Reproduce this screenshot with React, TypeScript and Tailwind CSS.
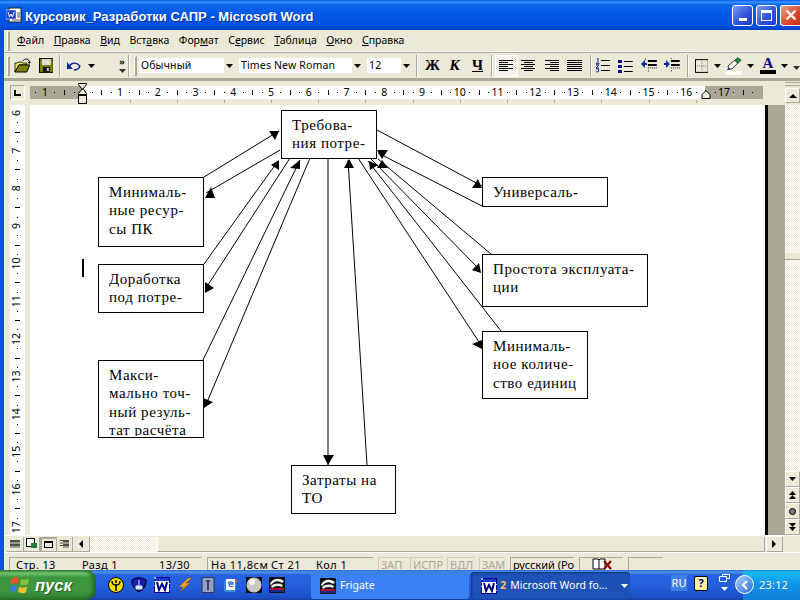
import React from "react";

const UI = "font-['Noto_Sans','Liberation_Sans',sans-serif]";

function Acc({ t, i }: { t: string; i: number }) {
  return (
    <span className="whitespace-nowrap">
      {t.slice(0, i)}
      <span className="underline">{t[i]}</span>
      {t.slice(i + 1)}
    </span>
  );
}

const Caret = ({ c = "#000" }: { c?: string }) => (
  <svg width="7" height="4" viewBox="0 0 7 4"><path d="M0 0h7L3.5 4z" fill={c} /></svg>
);

const Grip = () => <div className="w-[3px] h-[20px] border-l border-t border-white border-r-2 border-b border-r-[#aca899] border-b-[#aca899]" />;
const Sep = () => <div className="w-[2px] h-[22px] bg-[#aca899] border-r border-white" />;

const Combo = ({ w, t }: { w: string; t: string }) => (
  <div className={`${w} h-[15px] bg-white flex items-center justify-between text-[10.5px] leading-none text-black pl-[2px]`}>
    <span className="whitespace-nowrap tracking-[0.15px]">{t}</span>
    <span className="w-[11px] h-full bg-[#ece9d8] flex items-center justify-center"><Caret /></span>
  </div>
);

const AlignIcon = ({ kind, s = 15 }: { kind: "l" | "c" | "r" | "j"; s?: number }) => {
  const rows = [14, 9, 14, 9, 14, 9];
  return (
    <svg width={s} height="14" viewBox="0 0 15 14">
      {rows.map((w, i) => {
        const wd = kind === "j" ? 15 : w;
        const x = kind === "l" || kind === "j" ? 0 : kind === "c" ? (15 - wd) / 2 : 15 - wd;
        return <rect key={i} x={Math.floor(x)} y={1 + i * 2} width={wd} height="1" fill="#000" />;
      })}
    </svg>
  );
};

const Ruler = () => {
  const pos = (n: number) => 120 + (n - 1) * 37.75;
  const marks: React.ReactNode[] = [];
  for (let n = 0; n <= 17; n++) {
    const base = pos(n);
    if (n >= 1) {
      marks.push(<text key={"n" + n} x={base} y="96" textAnchor="middle" fontSize="10.5" fontFamily="'Noto Sans','Liberation Sans',sans-serif" fill="#000">{n}</text>);
    }
    [0.25, 0.5, 0.75].forEach((f, i) => {
      const x = Math.round(base + f * 37.75);
      marks.push(<rect key={n + "-" + i} x={x} y={i === 1 ? 90 : 92} width="1" height={i === 1 ? 5 : 1} fill="#000" />);
    });
  }
  const left = [35, 54, 64, 74];
  const tabs = [130, 177, 224, 271, 318, 365, 413, 460, 507, 554, 601, 649, 696];
  return (
    <svg className="absolute left-0 top-0" width="796" height="24" viewBox="4 81 796 24">
      <rect x="30" y="86" width="53" height="13" fill="#aca899" />
      <rect x="83" y="86" width="622" height="13" fill="#fff" />
      <rect x="705" y="86" width="58" height="13" fill="#aca899" />
      <text x="45" y="96" textAnchor="middle" fontSize="10.5" fontFamily="'Noto Sans','Liberation Sans',sans-serif" fill="#000">1</text>
      {left.map((x, i) => <rect key={i} x={x} y={i === 2 ? 90 : 92} width="1" height={i === 2 ? 5 : 1} fill="#000" />)}
      {marks}
      {tabs.map((x) => <rect key={x} x={x} y="100" width="1" height="3" fill="#aca899" />)}
      <path d="M78.5 83.5h8v1l-3 4 -1 .5 1 .5 3 4v1h-8v-1l3-4 1-.5 -1-.5 -3-4z" fill="#ece9d8" stroke="#000" />
      <rect x="78.5" y="95.5" width="8" height="8" fill="#ece9d8" stroke="#000" />
      <path d="M706 90.500l4 4v4h-8v-4z" fill="#ece9d8" stroke="#000" />
    </svg>
  );
};

const VRuler = () => {
  const p = (n: number) => 8 + (n - 6) * 37.65;
  const items: React.ReactNode[] = [];
  for (let n = 6; n <= 17; n++) {
    items.push(
      <text key={n} x="0" y="0" fontSize="10.5" textAnchor="middle" fontFamily="'Noto Sans','Liberation Sans',sans-serif" fill="#000" transform={`translate(9.500 ${p(n)}) rotate(-90)`}>{n}</text>
    );
    if (n < 17) {
      [0.25, 0.5, 0.75].forEach((f, i) => (
        items.push(<rect key={n + "v" + i} x={i === 1 ? 5 : 7} y={Math.round(p(n) + f * 37.65)} width={i === 1 ? 5 : 1} height="1" fill="#000" />)
      ));
    }
  }
  return <svg width="15" height="430" viewBox="0 0 15 430">{items}</svg>;
};

const lines: number[][] = [
  [204, 177, 279, 131],
  [280, 150, 206, 193],
  [204, 264, 278, 161],
  [290, 158, 206, 288],
  [203, 360, 300, 160],
  [310, 158, 205, 407],
  [328, 158, 328, 465],
  [367, 465, 348, 160],
  [377, 130, 482, 186],
  [482, 206, 378, 153],
  [491, 254, 378, 159],
  [370, 158, 480, 270],
  [501, 331, 368, 161],
  [358, 158, 481, 345],
];
const heads = [
  "269,131 279,131 275,140",
  "205,198 215,198 211,187",
  "279,160 271,165 279,170",
  "205,282 214,288 205,293",
  "300,160 290,168 300,169",
  "204,408 203,398 213,402",
  "323,455 334,455 328,465",
  "349,159 344,168 354,168",
  "478,179 472,188 482,188",
  "377,150 388,150 382,159",
  "382,160 377,168 388,168",
  "378,165 369,161 370,170",
  "481,273 472,270 479,263",
  "482,349 472,344 482,340",
];

const Box = ({ pos, ls }: { pos: string; ls: string[] }) => (
  <div className={`absolute ${pos} bg-white border border-black pl-[10px] pt-[5px] pb-px font-['Liberation_Serif',serif] text-[15px] leading-[18.4px] tracking-[0.55px] text-black`}>
    <div className="h-full overflow-hidden">
      {ls.map((l) => <div key={l} className="whitespace-nowrap">{l}</div>)}
    </div>
  </div>
);

const WordIcon = ({ s = 16 }: { s?: number }) => (
  <svg width={s} height={s} viewBox="0 0 16 16">
    <rect width="16" height="16" fill="#00008b" />
    <rect x="1" y="1" width="14" height="14" fill="#fff" />
    <rect x="1" y="1" width="14" height="3" fill="#1a3bd0" />
    <path d="M3 5l2 8 3-6 3 6 2-8" fill="none" stroke="#00008b" strokeWidth="2" />
    <path d="M0 0h2v2H0zM0 4h1v1H0zM0 8h1v1H0zM15 6h1v1h-1zM15 12h1v1h-1z" fill="#9fb6ff" />
  </svg>
);

const FrigateIcon = () => (
  <svg width="16" height="16" viewBox="0 0 16 16">
    <rect width="16" height="16" fill="#111" rx="1" />
    <path d="M1 7C3 2 9 0 15 4L13 6C9 3 5 4 2 8z" fill="#fff" />
    <path d="M2 9c4-3 8-3 12-1l-1 2C9 8 6 9 3 11z" fill="#e8e8e8" />
    <rect x="1" y="11" width="14" height="2" fill="#b01030" />
    <rect x="1" y="13" width="14" height="2" fill="#1a2a90" />
  </svg>
);

export default function App() {
  return (
    <div className={`relative w-[800px] h-[600px] overflow-hidden flex flex-col ${UI} bg-[#ece9d8]`}>
      {/* Title bar */}
      <div className="h-[30px] shrink-0 flex items-center pl-[6px] pr-0 bg-[linear-gradient(180deg,#0058e6_0%,#3a93ff_7%,#0a66ee_16%,#0055e5_55%,#0050e0_85%,#0042c4_100%)]">
        <svg width="16" height="16" viewBox="0 0 16 16" className="shrink-0">
          <rect x="3" y="1" width="12" height="14" fill="#fff" stroke="#222" />
          <rect x="0" y="3" width="10" height="9" fill="#1a3bd0" stroke="#fff" strokeWidth="0.5" />
          <path d="M2 5l1.500 5 1.500-3 1.500 3 1.500-5" stroke="#fff" fill="none" />
          <path d="M11 6h3M11 8h3M11 10h3M6 13h8" stroke="#555" />
        </svg>
        <div className="ml-[3px] pt-[2px] text-white font-bold text-[13px] leading-none whitespace-nowrap font-['Liberation_Sans',sans-serif] [text-shadow:1px_1px_0_#0030a0]">
          Курсовик_Разработки САПР - Microsoft Word
        </div>
        <div className="ml-auto flex gap-[3px] pr-0 items-center">
          <div className="w-[21px] h-[21px] rounded-[3px] border border-white bg-[linear-gradient(135deg,#7a9cf0,#2a52d8_60%,#1c3fc0)] relative flex items-end justify-center pb-[4px]">
            <div className="w-[8px] h-[3px] bg-white" />
          </div>
          <div className="w-[21px] h-[21px] rounded-[3px] border border-white bg-[linear-gradient(135deg,#7a9cf0,#2a52d8_60%,#1c3fc0)] flex items-center justify-center">
            <div className="w-[11px] h-[11px] border border-white border-t-[3px]" />
          </div>
          <div className="w-[20px] h-[21px] rounded-l-[3px] border border-white border-r-0 bg-[linear-gradient(135deg,#e8a088,#d8492a_60%,#b8300f)] flex items-center justify-center">
            <svg width="12" height="12" viewBox="0 0 12 12"><path d="M1.500 1.500l9 9M10.500 1.500l-9 9" stroke="#fff" strokeWidth="2.200" /></svg>
          </div>
        </div>
      </div>

      {/* Window body */}
      <div className="flex-1 min-h-0 flex flex-col border-l-[4px] border-[#0a4fe0] relative">
        {/* Menu bar */}
        <div className="h-[22px] shrink-0 flex items-center border-b border-white text-[10.5px] text-black pl-[3px]">
          <Grip />
          <div className="flex ml-[7px] gap-[9.500px]">
            <Acc t="Файл" i={0} />
            <Acc t="Правка" i={0} />
            <Acc t="Вид" i={0} />
            <Acc t="Вставка" i={3} />
            <Acc t="Формат" i={3} />
            <Acc t="Сервис" i={1} />
            <Acc t="Таблица" i={0} />
            <Acc t="Окно" i={0} />
            <Acc t="Справка" i={0} />
          </div>
        </div>
        <div className="h-px bg-[#aca899] shrink-0" />

        {/* Toolbar */}
        <div className="h-[25px] shrink-0 flex items-center pl-[3px] border-b-[3px] border-[#aca899] box-content pt-0">
          <Grip />
          <svg width="18" height="16" viewBox="0 0 18 16" className="ml-[4px]">
            <path d="M1 14V5h2l1-1h4l1 1h4v2H5L1 14h12l3-7H5" fill="#f0e060" stroke="#000" strokeWidth="0.800" />
            <path d="M1 14L5 7h11l-3 7z" fill="#808000" stroke="#000" strokeWidth="0.800" />
            <path d="M9 3C10 1 13 0 15 2l1 2" fill="none" stroke="#000" /><path d="M14 4h3l-1 2z" fill="#000" />
          </svg>
          <svg width="15" height="15" viewBox="0 0 15 15" className="ml-[7px]">
            <rect x="0.500" y="0.500" width="14" height="14" fill="#808000" stroke="#000" />
            <rect x="3" y="1" width="9" height="6" fill="#ddd" />
            <rect x="4" y="9" width="7" height="5" fill="#111" /><rect x="8" y="10" width="2" height="3" fill="#ccc" />
          </svg>
          <div className="ml-[6px]"><Sep /></div>
          <svg width="14" height="10" viewBox="0 0 14 10" className="ml-[6px]">
            <path d="M2 7 C3 2 9 0 13 5 C13 8 9 9 7 9" fill="none" stroke="#0a2aa0" strokeWidth="1.500" />
            <path d="M0 1v7h6z" fill="#0a2aa0" />
          </svg>
          <div className="ml-[7px]"><Caret /></div>
          <div className="ml-[23px] flex flex-col items-center gap-[3px] w-[8px]">
            <span className="text-[9px] leading-[8px] font-bold">»</span>
            <Caret c="#333" />
          </div>
          <div className="ml-[2px]"><Sep /></div>
          <div className="ml-[4px]"><Grip /></div>
          <div className="ml-[2px] flex gap-[4px] items-center">
            <Combo w="w-[96px]" t="Обычный" />
            <Combo w="w-[124px]" t="Times New Roman" />
            <Combo w="w-[45px]" t="12" />
          </div>
          <div className="ml-[4px]"><Sep /></div>
          <div className="flex items-center font-['Liberation_Serif',serif] font-bold text-[15px] leading-none ml-[7px] gap-[10px] text-black">
            <span className="w-[13px] text-center">Ж</span>
            <span className="w-[13px] text-center italic">К</span>
            <span className="w-[13px] text-center underline">Ч</span>
          </div>
          <div className="ml-[7px]"><Sep /></div>
          <div className="ml-[2px] w-[23px] h-[22px] border border-white bg-[repeating-conic-gradient(#fff_0_25%,#ece9d8_0_50%)] bg-[length:2px_2px] flex items-center justify-center"><AlignIcon kind="l" /></div>
          <div className="ml-[3px] flex gap-[8px] items-center">
            <AlignIcon kind="c" /><AlignIcon kind="r" /><AlignIcon kind="j" />
          </div>
          <div className="ml-[8px]"><Sep /></div>
          <svg width="15" height="15" viewBox="0 0 15 15" className="ml-[4px]">
            <path d="M1 0h1v4M0 5h3v1H0zM0 7h3L0 10h3M0 11h3l-1 1 1 1-1 1H0" stroke="#0a2aa0" fill="none" />
            <path d="M5 2h10v1H5zM5 7h10v1H5zM5 12h10v1H5z" fill="#000" />
          </svg>
          <svg width="15" height="14" viewBox="0 0 15 14" className="ml-[8px]">
            <path d="M0 1h4v3H0zM0 6h4v3H0zM0 11h4v3H0z" fill="#0a0a90" />
            <path d="M6 2h9v1H6zM6 7h9v1H6zM6 12h9v1H6z" fill="#000" />
          </svg>
          <svg width="16" height="15" viewBox="0 0 16 15" className="ml-[8px]">
            <path d="M0 6l4-4v3h2v2H4v3z" fill="#0a2aa0" />
            <path d="M7 2h9v2H7zM7 6h9v2H7z" fill="#000" />
            <path d="M7 10h9M4 1h2M7 13h2" stroke="#000" strokeDasharray="1 1" />
          </svg>
          <svg width="16" height="15" viewBox="0 0 16 15" className="ml-[7px]">
            <path d="M6 6L2 2v3H0v2h2v3z" fill="#0a2aa0" />
            <path d="M7 2h9v2H7zM7 6h9v2H7z" fill="#000" />
            <path d="M7 10h9M7 0h2M7 13h2" stroke="#000" strokeDasharray="1 1" />
          </svg>
          <div className="ml-[7px]"><Sep /></div>
          <svg width="14" height="14" viewBox="0 0 14 14" className="ml-[6px]">
            <rect x="0.500" y="0.500" width="13" height="13" fill="none" stroke="#000" />
            <path d="M7 2v10M2 7h10" stroke="#777" strokeDasharray="1 1" />
          </svg>
          <div className="ml-[6px]"><Caret /></div>
          <svg width="16" height="18" viewBox="0 0 16 18" className="ml-[5px]">
            <path d="M2 9L9 3l3 3-6 6H3z" fill="#fff" stroke="#000" strokeWidth="0.800" />
            <path d="M9 3l3-2.500 3.500 2.500-3.500 3.500z" fill="#1a8a3a" stroke="#004" strokeWidth="0.500" />
            <path d="M3 10L1 13h3z" fill="#2a2aa0" />
            <rect x="0" y="14" width="16" height="4" fill="#fff" />
          </svg>
          <div className="ml-[5px]"><Caret /></div>
          <div className="ml-[6px] flex flex-col items-center w-[16px]">
            <span className="font-['Liberation_Serif',serif] font-bold text-[#0a0a80] text-[15px] leading-[13px]">A</span>
            <div className="w-[16px] h-[4px] bg-black" />
          </div>
          <div className="ml-[5px]"><Caret /></div>
          <div className="ml-[5px] pt-[5px]"><Caret c="#333" /></div>
        </div>

        {/* Ruler row */}
        <div className="h-[24px] shrink-0 relative">
          <Ruler />
          <div className="absolute left-[6px] top-[4px] w-[15px] h-[15px] bg-[#ece9d8] border border-[#aca899] border-b-white border-r-white flex items-center justify-center">
            <div className="w-[7px] h-[6px] border-l-2 border-b-2 border-black" />
          </div>
          <div className="absolute right-0 top-[1px] w-[15px] h-[4px] border-t border-b border-[#aca899]" />
          <div className="absolute right-0 top-[7px] w-[15px] h-[15px] border border-t-white border-l-white border-b-[#aca899] border-r-[#aca899] flex items-center justify-center">
            <svg width="8" height="4" viewBox="0 0 8 4"><path d="M0 4h8L4 0z" fill="#000" /></svg>
          </div>
        </div>

        {/* Work area */}
        <div className="flex-1 min-h-0 flex">
          <div className="w-[26px] shrink-0 flex pl-[6px]">
            <div className="w-[15px] bg-white"><VRuler /></div>
          </div>
          <div className="w-[735px] shrink-0 bg-white relative overflow-hidden">
            <svg className="absolute left-0 top-0" width="735" height="430" viewBox="30 105 735 430">
              {lines.map((l, i) => <line key={i} x1={l[0]} y1={l[1]} x2={l[2]} y2={l[3]} stroke="#000" strokeWidth="1" />)}
              {heads.map((p) => <polygon key={p} points={p} fill="#000" />)}
            </svg>
            <Box pos="left-[251px] top-[5px] w-[96px] h-[49px]" ls={["Требова-", "ния потре-"]} />
            <Box pos="left-[68px] top-[72px] w-[106px] h-[70px]" ls={["Минималь-", "ные ресур-", "сы ПК"]} />
            <Box pos="left-[68px] top-[159px] w-[106px] h-[49px]" ls={["Доработка", "под потре-"]} />
            <Box pos="left-[68px] top-[255px] w-[106px] h-[78px]" ls={["Макси-", "мально точ-", "ный резуль-", "тат расчёта"]} />
            <Box pos="left-[452px] top-[72px] w-[126px] h-[30px]" ls={["Универсаль-"]} />
            <Box pos="left-[452px] top-[149px] w-[166px] h-[53px]" ls={["Простота эксплуата-", "ции"]} />
            <Box pos="left-[452px] top-[226px] w-[106px] h-[68px]" ls={["Минималь-", "ное количе-", "ство единиц"]} />
            <Box pos="left-[261px] top-[360px] w-[105px] h-[49px]" ls={["Затраты на", "ТО"]} />
            <div className="absolute left-[52px] top-[154px] w-[2px] h-[18px] bg-black" />
          </div>
          <div className="w-[3px] bg-black shrink-0" />
          <div className="w-[17px] bg-[#aca899] shrink-0" />
          <div className="flex-1 flex flex-col bg-[repeating-conic-gradient(#fff_0_25%,#ece9d8_0_50%)] bg-[length:2px_2px]">
            <div className="flex-1 relative">
              <div className="absolute left-0 right-0 top-[148px] h-[7px] bg-[#ece9d8] border-b border-[#aca899]" />
            </div>
            {[
              <Caret key="a" />,
              <svg key="b" width="7" height="8" viewBox="0 0 7 8"><path d="M0 4h7L3.500 0zM0 8h7L3.500 4z" fill="#000" /></svg>,
              <span key="c" className="w-[7px] h-[7px] rounded-full bg-[#777] border border-black" />,
              <svg key="d" width="7" height="8" viewBox="0 0 7 8"><path d="M0 0h7L3.500 4zM0 4h7L3.500 8z" fill="#000" /></svg>,
            ].map((ic, i) => (
              <div key={i} className="h-[16px] bg-[#ece9d8] border-b border-r border-b-[#aca899] border-r-[#aca899] border-t-white border-l-white border-l border-t flex items-center justify-center">{ic}</div>
            ))}
          </div>
        </div>

        {/* Horizontal scrollbar */}
        <div className="h-[17px] shrink-0 flex items-center border-t border-white">
          <div className="flex pl-[3px]">
            {[
              <AlignIcon key="1" kind="j" s={10} />,
              <svg key="2" width="11" height="11" viewBox="0 0 11 11"><rect x="0.500" y="0.500" width="8" height="8" fill="#fff" stroke="#000" /><rect x="5" y="5" width="6" height="5" fill="#2a7a3a" /></svg>,
              <div key="3" className="w-[9px] h-[7px] border border-black border-t-2" />,
              <AlignIcon key="4" kind="r" s={10} />,
              <svg key="5" width="4" height="8" viewBox="0 0 4 8"><path d="M4 0L0 4l4 4z" fill="#000" /></svg>,
            ].map((ic, i) => (
              <div key={i} className={`w-[16.500px] h-[15px] flex items-center justify-center border-r border-b border-[#aca899] ${i === 2 ? "border-2" : ""}`}>{ic}</div>
            ))}
          </div>
          <div className="w-[67px] h-[15px] bg-[repeating-conic-gradient(#fff_0_25%,#ece9d8_0_50%)] bg-[length:2px_2px]" />
          <div className="w-[608px] h-[15px] border-l border-l-white border-b border-r border-b-[#aca899] border-r-[#aca899]" />
          <div className="w-[1px]" />
          <div className="w-[17px] h-[16px] border border-t-white border-l-white border-r-[#aca899] border-b-[#aca899] flex items-center justify-center">
            <svg width="4" height="8" viewBox="0 0 4 8"><path d="M0 0l4 4-4 4z" fill="#000" /></svg>
          </div>
        </div>

        {/* Status bar */}
        <div className="h-[18px] shrink-0 flex items-start pt-[4px] text-[11px] leading-[13px] text-black border-t border-white pl-[5px] whitespace-nowrap gap-[5px]">
          <div className="w-[193px] h-[13px] border-l border-t border-[#aca899] flex tracking-[0.35px]">
            <span className="ml-[6px] w-[66px]">Стр. 13</span>
            <span className="w-[77px]">Разд 1</span>
            <span>13/30</span>
          </div>
          <div className="w-[166px] h-[13px] border-l border-t border-[#aca899] flex tracking-[0.5px]">
            <span className="ml-[3px] w-[60px]">На 11,8см</span>
            <span className="w-[45px]">Ст 21</span>
            <span>Кол 1</span>
          </div>
          <div className="w-[31px] h-[13px] border-l border-t border-[#d0ccc0] text-[#aca899] pl-[2px]">ЗАП</div>
          <div className="w-[33px] h-[13px] border-l border-t border-[#d0ccc0] text-[#aca899] pl-[2px] -ml-[4px]">ИСПР</div>
          <div className="w-[27px] h-[13px] border-l border-t border-[#d0ccc0] text-[#aca899] pl-[2px] -ml-[1px]">ВДЛ</div>
          <div className="w-[25px] h-[13px] border-l border-t border-[#d0ccc0] text-[#aca899] pl-[2px]">ЗАМ</div>
          <div className="w-[64px] h-[13px] border-l border-t border-[#aca899] pl-[2px] ml-[1px]">русский (Ро</div>
          <div className="w-[44px] h-[13px] border-l border-t border-[#aca899] flex justify-center">
            <svg width="20" height="13" viewBox="0 0 20 13">
              <path d="M1 1h5l1 1v9H1zM7 2l1-1h5v10H7" fill="#fff" stroke="#000" />
              <path d="M12 3l7 8M19 3l-7 8" stroke="#8b0000" strokeWidth="2" />
            </svg>
          </div>
          <div className="w-[35px] h-[13px] border-l border-t border-[#aca899]" />
        </div>
      </div>

      {/* Taskbar */}
      <div className="h-[30px] shrink-0 relative flex items-center text-white bg-[linear-gradient(180deg,#3168d5_0%,#4993e6_8%,#2663e0_16%,#245edb_55%,#1a4fc8_90%,#1941a5_100%)]">
        <div className="w-[96px] h-full rounded-r-[10px] flex items-center pl-[10px] gap-[5px] bg-[linear-gradient(180deg,#3c8f3c_0%,#79c779_10%,#3c963c_25%,#3f953f_70%,#2f7a2f_100%)] shadow-[inset_-3px_0_4px_#1f5f1f]">
          <svg width="20" height="18" viewBox="0 0 20 18">
            <path d="M1 3C4 1 6 1 9 2L8 8C5 7 3 7 0 9z" fill="#e0562a" />
            <path d="M11 3C13 4 16 4 19 2L18 8C15 10 12 9 10 9z" fill="#7ec13a" />
            <path d="M0 11C3 9 5 9 7 10L6 16C4 15 2 15 0 17z" fill="#3a7fe0" />
            <path d="M9 11C12 12 15 12 17 10L16 16C14 18 11 17 8 16z" fill="#f0c030" />
          </svg>
          <span className="text-[16.500px] font-bold italic leading-none font-['Liberation_Sans',sans-serif] [text-shadow:1px_1px_1px_#1c5a1c]">пуск</span>
        </div>
        <div className="flex items-center gap-[7px] ml-[12px]">
          <svg width="16" height="16" viewBox="0 0 16 16"><circle cx="8" cy="8" r="7.500" fill="#f0e000" stroke="#000" /><path d="M8 14V7M4 4c0 4 2 4 4 4s4 0 4-4M8 3v3" fill="none" stroke="#000" strokeWidth="1.500" /></svg>
          <svg width="16" height="16" viewBox="0 0 16 16"><path d="M1 3c4-3 10-3 14 0 1 5-3 10-7 12C4 13 0 8 1 3z" fill="#1a1ab0" stroke="#000" /><path d="M8 3v8M5 9h6v3H5z" fill="#d0ffd0" stroke="#d0e8ff" /></svg>
          <WordIcon />
          <svg width="16" height="16" viewBox="0 0 16 16"><path d="M2 10L11 1h4L9 6h4L3 15l3-5z" fill="#f0a020" stroke="#7a5010" strokeWidth="0.500" /></svg>
          <svg width="16" height="16" viewBox="0 0 16 16"><rect x="2" y="0.500" width="12" height="15" fill="#8f9fc8" stroke="#334" /><path d="M6 3h4v2H9v8H7V5H6z" fill="#445" /></svg>
          <svg width="16" height="16" viewBox="0 0 16 16"><rect x="1" y="3" width="12" height="12" fill="#3a8ae0" rx="2" /><rect x="3" y="2" width="9" height="11" fill="#fff" /><path d="M5 6c2-2 5-1 5 1H6c0 3 3 3 4 2" fill="none" stroke="#2a6ad0" strokeWidth="1.300" /><path d="M12 2l3 2-3 2z" fill="#e06020" /></svg>
          <svg width="16" height="16" viewBox="0 0 16 16"><rect width="16" height="16" fill="#111" /><circle cx="8" cy="8" r="7.500" fill="#c8c8c8" /><circle cx="6" cy="5" r="3" fill="#f4f4f4" /></svg>
          <FrigateIcon />
        </div>
        <div className="absolute left-[311px] top-[2px] bottom-[1px] w-[158px] rounded-[3px] bg-[#3c81f3] flex items-center pl-[9px] gap-[4px] text-[10.500px]">
          <FrigateIcon /> <span>Frigate</span>
        </div>
        <div className="absolute left-[471px] top-[2px] bottom-[1px] w-[159px] rounded-[3px] bg-[#1e52b7] shadow-[inset_1px_1px_2px_#12357a] flex items-center pl-[10px] text-[10.500px]">
          <WordIcon />
          <span className="ml-[3px] text-[#f4b860] font-bold text-[11px]">2</span>
          <span className="ml-[4px] whitespace-nowrap">Microsoft Word fo...</span>
          <span className="ml-auto mr-[2px]"><Caret c="#fff" /></span>
        </div>
        <div className="absolute left-[671px] top-[5px] w-[16px] h-[16px] bg-[#3c81e3] flex items-center justify-center text-[11px]">RU</div>
        <div className="absolute left-[694px] top-[6px] w-[14px] h-[15px] bg-[#f8f0a0] border border-black rounded-[2px] flex items-center justify-center text-[11px] font-bold text-[#00008b]">?</div>
        <div className="absolute left-[719px] top-[4px] flex flex-col items-center gap-[5px]">
          <svg width="11" height="8" viewBox="0 0 11 8"><path d="M3.500 2.500v-2h7v4h-3M0.500 2.500h7v5h-7z" fill="none" stroke="#fff" /></svg>
          <Caret c="#fff" />
        </div>
        <div className="absolute left-[743px] top-0 bottom-0 right-0 bg-[linear-gradient(180deg,#0c8ddf_0%,#19b9f3_8%,#1290e8_50%,#0f80d8_100%)] flex items-center pl-[16px] text-[11px] tracking-[0.2px]">23:12</div>
        <div className="absolute left-[735px] top-[5px] w-[19px] h-[19px] rounded-full bg-[linear-gradient(135deg,#a8d0f8,#2a6ae0)] border border-white flex items-center justify-center">
          <svg width="8" height="10" viewBox="0 0 8 10"><path d="M6 1L2 5l4 4" fill="none" stroke="#fff" strokeWidth="2.200" /></svg>
        </div>
      </div>
    </div>
  );
}
